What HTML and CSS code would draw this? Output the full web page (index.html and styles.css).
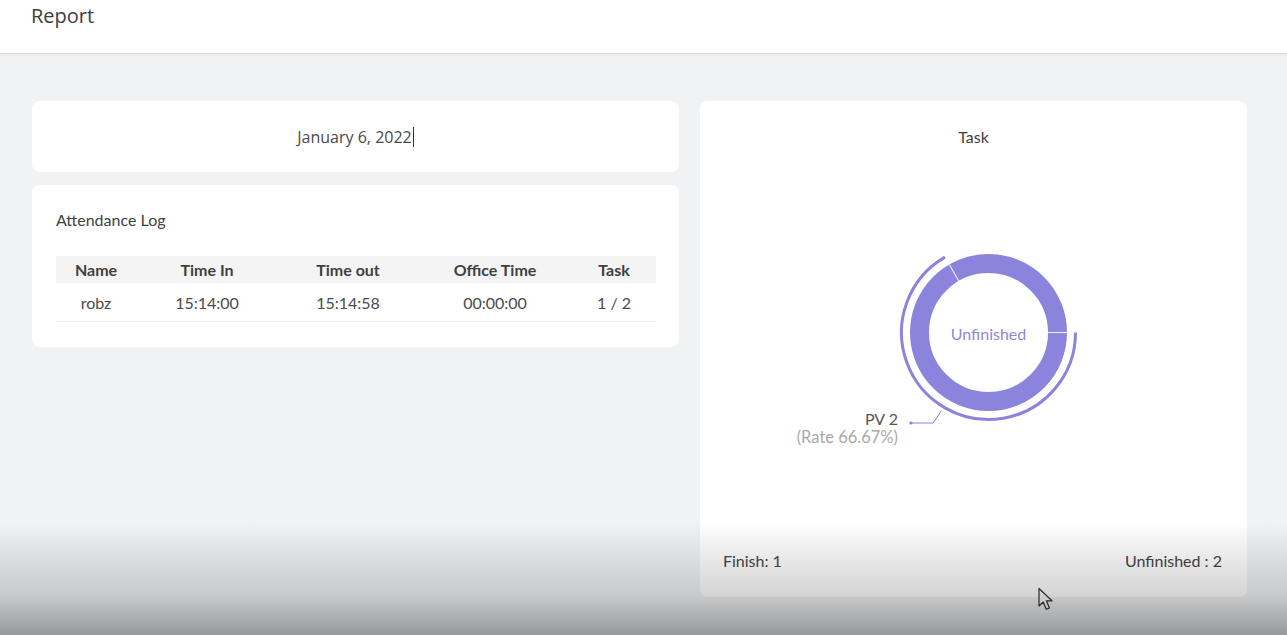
FILE: index.html
```html
<!DOCTYPE html>
<html lang="en">
<head>
<meta charset="utf-8">
<title>Report</title>
<link rel="stylesheet" href="styles.css">
</head>
<body>
<header class="topbar">
  <h1 class="page-title">Report</h1>
</header>
<main class="content">
  <section class="left-col">
    <div class="card date-card">
      <span class="date-text">January 6, 2022</span><span class="caret"></span>
    </div>
    <div class="card log-card">
      <h2 class="card-title">Attendance Log</h2>
      <div class="log-table">
        <div class="row head">
          <div class="cell">Name</div>
          <div class="cell">Time In</div>
          <div class="cell">Time out</div>
          <div class="cell">Office Time</div>
          <div class="cell">Task</div>
        </div>
        <div class="row body">
          <div class="cell">robz</div>
          <div class="cell">15:14:00</div>
          <div class="cell">15:14:58</div>
          <div class="cell">00:00:00</div>
          <div class="cell">1 / 2</div>
        </div>
      </div>
    </div>
  </section>
  <section class="card task-card">
    <h2 class="task-title">Task</h2>
    <svg class="donut" width="547" height="380" viewBox="0 0 547 380">
      <circle cx="288.5" cy="184.5" r="69" fill="none" stroke="#8b84dd" stroke-width="19"/>
      <line x1="258.75" y1="133" x2="249.25" y2="116.5" stroke="#ebe9fa" stroke-width="1.2"/>
      <line x1="348" y1="184.5" x2="367" y2="184.5" stroke="#ebe9fa" stroke-width="1.2"/>
      <path d="M 375.5 184.5 A 87 87 0 1 1 245 109.16" fill="none" stroke="#8b84dd" stroke-width="3"/>
      <polyline points="241.6,262.5 233,275 211,275" fill="none" stroke="#8b84dd" stroke-width="1"/>
      <circle cx="211" cy="275" r="1.6" fill="#8b84dd"/>
      <text x="288.5" y="185" class="center-label" text-anchor="middle" dominant-baseline="central">Unfinished</text>
      <text x="198" y="277" class="pv-label" text-anchor="end">PV 2</text>
      <text x="198" y="295" class="rate-label" text-anchor="end">(Rate 66.67%)</text>
    </svg>
    <div class="task-footer">
      <span>Finish: 1</span>
      <span>Unfinished : 2</span>
    </div>
  </section>
</main>
<svg class="pointer" width="20" height="26" viewBox="0 0 20 26">
  <path d="M2 1.5 L2 19 L6.2 15 L9.3 22.3 L12.4 21 L9.4 13.8 L15 13.8 Z" fill="#fafafa" stroke="#333" stroke-width="1.2" stroke-linejoin="round"/>
</svg>
<div class="shade"></div>
</body>
</html>
```

FILE: styles.css
```css
* { box-sizing: border-box; }

html, body {
  margin: 0;
  padding: 0;
  height: 100%;
}

body {
  width: 1287px;
  height: 635px;
  overflow: hidden;
  position: relative;
  background: #f0f2f4;
  font-family: Lato, "Open Sans", "Liberation Sans", sans-serif;
  color: #444;
}

.topbar {
  height: 54px;
  background: #ffffff;
  border-bottom: 1px solid #dcdcdc;
  box-shadow: 0 1px 2px rgba(0, 0, 0, 0.04);
  padding: 3px 31px 0;
}

.page-title {
  margin: 0;
  font-family: "Open Sans", Lato, sans-serif;
  font-weight: 400;
  font-size: 20px;
  line-height: 26px;
  color: #3d3d3d;
}

.content {
  display: flex;
  gap: 21px;
  padding: 47px 40px 0 32px;
  align-items: flex-start;
}

.left-col {
  width: 647px;
  display: flex;
  flex-direction: column;
  gap: 13px;
}

.card {
  background: #ffffff;
  border-radius: 8px;
}

.date-card {
  height: 71px;
  display: flex;
  align-items: center;
  justify-content: center;
}

.date-text {
  font-family: "Open Sans", sans-serif;
  font-size: 16px;
  color: #4a4a4a;
}

.caret {
  display: inline-block;
  width: 1px;
  height: 20px;
  background: #333;
  margin-left: 1px;
}

.log-card {
  height: 162px;
  padding: 24px 23px 0 24px;
}

.card-title {
  margin: 0;
  font-size: 16px;
  font-weight: 400;
  line-height: 22px;
  color: #3f3f3f;
}

.log-table {
  margin-top: 25px;
  width: 600px;
}

.row {
  display: grid;
  grid-template-columns: 80px 142px 140px 154px 84px;
  align-items: center;
  text-align: center;
  font-size: 16px;
}

.row.head {
  height: 27px;
  background: #f4f4f5;
  font-weight: 700;
  color: #404040;
}

.row.body {
  height: 39px;
  border-bottom: 1px solid #efefef;
  color: #4a4a4a;
  padding-top: 1px;
}

.task-card {
  width: 547px;
  height: 496px;
  display: flex;
  flex-direction: column;
}

.task-title {
  margin: 0;
  padding-top: 25px;
  font-size: 16px;
  font-weight: 400;
  line-height: 22px;
  text-align: center;
  color: #3f3f3f;
}

.donut {
  display: block;
  flex: none;
}

.center-label {
  font-family: Lato, sans-serif;
  font-size: 16px;
  fill: #8f88d8;
}

.pv-label {
  font-family: Lato, sans-serif;
  font-size: 16px;
  fill: #555;
}

.rate-label {
  font-family: Lato, sans-serif;
  font-size: 16.5px;
  fill: #a9a9a9;
}

.task-footer {
  margin-top: auto;
  display: flex;
  justify-content: space-between;
  padding: 0 25px 25px 23px;
  font-size: 16px;
  line-height: 22px;
  color: #444;
}

.pointer {
  position: absolute;
  left: 1037px;
  top: 587px;
}

.shade {
  position: absolute;
  left: 0;
  right: 0;
  bottom: 0;
  height: 112px;
  pointer-events: none;
  background: linear-gradient(to bottom,
    rgba(0, 0, 0, 0) 0%,
    rgba(0, 0, 0, 0.09) 32%,
    rgba(0, 0, 0, 0.17) 65%,
    rgba(0, 0, 0, 0.37) 100%);
}
```
